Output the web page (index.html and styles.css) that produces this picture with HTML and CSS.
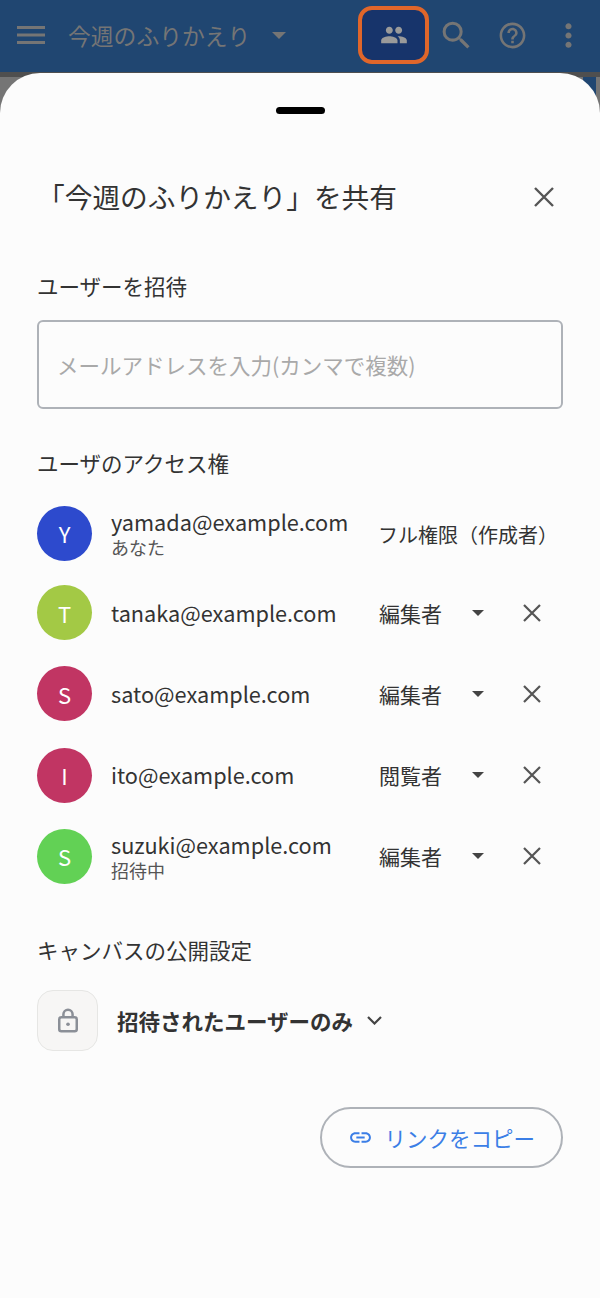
FILE: index.html
```html
<!DOCTYPE html>
<html lang="ja">

<head>
    <meta charset="UTF-8">
    <meta name="viewport" content="width=device-width, initial-scale=1.0">
    <title>共有</title>
    <link rel="stylesheet" href="styles.css">
</head>

<body>
    <header class="appbar">
        <svg class="menu-icon" viewBox="0 0 28 18"><path d="M0 1.5h28M0 9h28M0 16.5h28" /></svg>
        <span class="board-name">今週のふりかえり</span>
        <span class="board-caret"></span>
        <button class="share-btn">
            <svg viewBox="0 0 24 24" width="28" height="28"><path d="M16 11c1.66 0 2.99-1.34 2.99-3S17.66 5 16 5s-3 1.34-3 3 1.34 3 3 3zm-8 0c1.66 0 2.99-1.34 2.99-3S9.66 5 8 5 5 6.34 5 8s1.34 3 3 3zm0 2c-2.33 0-7 1.17-7 3.5V19h14v-2.5C15 14.17 10.33 13 8 13zm8 0c-.29 0-.62.02-.97.05 1.16.84 1.97 1.97 1.97 3.45V19h6v-2.5c0-2.33-4.67-3.5-7-3.5z" /></svg>
        </button>
        <svg class="bar-icon search-icon" viewBox="0 0 24 24" width="37" height="37"><path d="M15.5 14h-.79l-.28-.27A6.47 6.47 0 0 0 16 9.5 6.5 6.5 0 1 0 9.5 16c1.61 0 3.09-.59 4.23-1.57l.27.28v.79l5 4.99L20.49 19l-4.99-5zm-6 0C7.01 14 5 11.99 5 9.5S7.01 5 9.5 5 14 7.01 14 9.5 11.99 14 9.5 14z" /></svg>
        <svg class="bar-icon help-icon" viewBox="0 0 24 24" width="31" height="31"><path d="M11 18h2v-2h-2v2zm1-16C6.48 2 2 6.48 2 12s4.48 10 10 10 10-4.48 10-10S17.52 2 12 2zm0 18c-4.41 0-8-3.59-8-8s3.59-8 8-8 8 3.59 8 8-3.59 8-8 8zm0-14c-2.21 0-4 1.79-4 4h2c0-1.1.9-2 2-2s2 .9 2 2c0 2-3 1.75-3 5h2c0-2.25 3-2.5 3-5 0-2.21-1.79-4-4-4z" /></svg>
        <svg class="bar-icon more-icon" viewBox="0 0 24 24" width="37" height="37"><path d="M12 8c1.1 0 2-.9 2-2s-.9-2-2-2-2 .9-2 2 .9 2 2 2zm0 2c-1.1 0-2 .9-2 2s.9 2 2 2 2-.9 2-2-.9-2-2-2zm0 6c-1.1 0-2 .9-2 2s.9 2 2 2 2-.9 2-2-.9-2-2-2z" /></svg>
    </header>

    <main class="sheet">
        <div class="handle"></div>

        <div class="sheet-head">
            <h1>「今週のふりかえり」を共有</h1>
            <svg class="close-big" viewBox="0 0 20 20" width="20" height="20"><path d="M1 1l18 18M19 1L1 19" /></svg>
        </div>

        <h2 class="label invite-label">ユーザーを招待</h2>
        <div class="email-input">メールアドレスを入力(カンマで複数)</div>

        <h2 class="label access-label">ユーザのアクセス権</h2>
        <ul class="users">
            <li class="user user-first">
                <span class="avatar" style="background: #2d4acd">Y</span>
                <div class="user-text">
                    <div class="email">yamada@example.com</div>
                    <div class="note">あなた</div>
                </div>
                <span class="role-full">フル権限（作成者）</span>
            </li>
            <li class="user">
                <span class="avatar" style="background: #a3c945">T</span>
                <div class="user-text">
                    <div class="email">tanaka@example.com</div>
                </div>
                <span class="role">編集者</span>
                <span class="caret"></span>
                <svg class="remove" viewBox="0 0 18 18" width="18" height="18"><path d="M1 1l16 16M17 1L1 17" /></svg>
            </li>
            <li class="user">
                <span class="avatar" style="background: #c13563">S</span>
                <div class="user-text">
                    <div class="email">sato@example.com</div>
                </div>
                <span class="role">編集者</span>
                <span class="caret"></span>
                <svg class="remove" viewBox="0 0 18 18" width="18" height="18"><path d="M1 1l16 16M17 1L1 17" /></svg>
            </li>
            <li class="user">
                <span class="avatar" style="background: #c13563">I</span>
                <div class="user-text">
                    <div class="email">ito@example.com</div>
                </div>
                <span class="role">閲覧者</span>
                <span class="caret"></span>
                <svg class="remove" viewBox="0 0 18 18" width="18" height="18"><path d="M1 1l16 16M17 1L1 17" /></svg>
            </li>
            <li class="user">
                <span class="avatar" style="background: #62d155">S</span>
                <div class="user-text">
                    <div class="email">suzuki@example.com</div>
                    <div class="note">招待中</div>
                </div>
                <span class="role">編集者</span>
                <span class="caret"></span>
                <svg class="remove" viewBox="0 0 18 18" width="18" height="18"><path d="M1 1l16 16M17 1L1 17" /></svg>
            </li>
        </ul>

        <h2 class="label public-label">キャンバスの公開設定</h2>
        <div class="visibility">
            <span class="lock-box">
                <svg viewBox="0 0 24 30" width="20" height="25"><rect x="1.5" y="11" width="21" height="17" rx="2.5" /><path d="M6.5 11V7.5a5.5 5.5 0 0 1 11 0V11" /><circle class="lock-dot" cx="12" cy="19.5" r="2.2" /></svg>
            </span>
            <span class="visibility-text">招待されたユーザーのみ</span>
            <svg class="chevron" viewBox="0 0 15 9" width="15" height="9"><path d="M1 1l6.5 6.5L14 1" /></svg>
        </div>

        <div class="actions">
            <button class="copy-btn">
                <svg viewBox="0 0 24 24" width="25" height="25"><path d="M3.9 12c0-1.71 1.39-3.1 3.1-3.1h4V7H7c-2.76 0-5 2.24-5 5s2.24 5 5 5h4v-1.9H7c-1.71 0-3.1-1.39-3.1-3.1zM8 13h8v-2H8v2zm9-6h-4v1.9h4c1.71 0 3.1 1.39 3.1 3.1s-1.39 3.1-3.1 3.1h-4V17h4c2.76 0 5-2.24 5-5s-2.24-5-5-5z" /></svg>
                リンクをコピー
            </button>
        </div>
    </main>
</body>

</html>
```

FILE: styles.css
```css
* {
    box-sizing: border-box;
}

body {
    font-family: "Noto Sans CJK JP", "Noto Sans", sans-serif;
    margin: 0;
    height: 1298px;
    overflow: hidden;
    background: linear-gradient(90deg, #757575 583px, #204671 583px, #204671 596px, #757575 596px);
    color: #333;
}

/* top bar, dimmed by the sheet overlay */
.appbar {
    display: flex;
    align-items: center;
    height: 72px;
    padding: 0 0 2px 17px;
    background: #204671;
    box-shadow: 0 5px 0 #4f4f4f;
}

.menu-icon {
    width: 28px;
    height: 18px;
    fill: none;
    stroke: #757575;
    stroke-width: 3;
}

.board-name {
    margin-left: 23px;
    font-size: 22.8px;
    color: #757575;
}

.board-caret {
    margin-left: 22px;
    border-left: 7px solid transparent;
    border-right: 7px solid transparent;
    border-top: 7px solid #757575;
}

.share-btn {
    display: flex;
    align-items: center;
    justify-content: center;
    width: 71px;
    height: 58px;
    margin-left: 72px;
    padding: 0;
    background: #17346b;
    border: 4px solid #e0662a;
    border-radius: 14px;
}

.share-btn svg {
    fill: #9a9a9a;
}

.bar-icon {
    fill: #757575;
}

.search-icon {
    margin-left: 9px;
}

.help-icon {
    margin-left: 22px;
}

.more-icon {
    margin-left: 22px;
}

.sheet {
    position: relative;
    height: 1225px;
    margin-top: 1px;
    padding: 34px 37px 0;
    background: #fcfcfc;
    border-radius: 40px 40px 0 0;
}

.handle {
    width: 49px;
    height: 7px;
    margin: 0 auto;
    background: #000;
    border-radius: 4px;
}

.sheet-head {
    display: flex;
    align-items: center;
    justify-content: space-between;
    margin-top: 62px;
    padding-right: 9px;
}

h1 {
    margin: 0;
    font-size: 27.7px;
    font-weight: 400;
    line-height: 40px;
}

.close-big {
    margin-top: 2px;
    fill: none;
    stroke: #555;
    stroke-width: 2.4;
}

.label {
    margin: 0;
    font-size: 21.5px;
    font-weight: 400;
    line-height: 30px;
}

.invite-label {
    margin-top: 55px;
}

.email-input {
    display: flex;
    align-items: center;
    height: 89px;
    margin-top: 19px;
    padding-left: 18px;
    font-size: 21.5px;
    color: #a9a9a9;
    border: 2px solid #aeb2b8;
    border-radius: 6px;
}

.access-label {
    margin-top: 39px;
}

.users {
    margin: 16px 0 0;
    padding: 0;
    list-style: none;
}

.user {
    display: flex;
    align-items: center;
    height: 81.25px;
}

.user-first {
    height: 78px;
}

.avatar {
    flex: none;
    display: flex;
    align-items: center;
    justify-content: center;
    width: 55px;
    height: 55px;
    font-size: 22px;
    color: #fff;
    border-radius: 50%;
}

.user-text {
    width: 268px;
    margin-left: 19px;
}

.email {
    font-size: 21.7px;
    line-height: 28px;
}

.note {
    font-size: 18px;
    line-height: 22px;
    color: #555;
}

.role-full {
    margin: 2px 0 0 -1px;
    font-size: 20px;
}

.role {
    width: 93px;
    font-size: 21px;
}

.caret {
    border-left: 6px solid transparent;
    border-right: 6px solid transparent;
    border-top: 6px solid #444;
}

.remove {
    margin-left: 39px;
    fill: none;
    stroke: #555;
    stroke-width: 2.2;
}

.public-label {
    margin-top: 38px;
}

.visibility {
    display: flex;
    align-items: center;
    margin-top: 25px;
}

.lock-box {
    display: flex;
    align-items: center;
    justify-content: center;
    width: 61px;
    height: 61px;
    background: #f7f6f5;
    border: 1px solid #e6e6e4;
    border-radius: 16px;
}

.lock-box svg {
    fill: none;
    stroke: #8b8f97;
    stroke-width: 3;
}

.lock-box .lock-dot {
    fill: #8b8f97;
    stroke: none;
}

.visibility-text {
    margin-left: 19px;
    font-size: 21.5px;
    font-weight: 700;
}

.chevron {
    margin-left: 14px;
    fill: none;
    stroke: #444;
    stroke-width: 2.2;
}

.actions {
    display: flex;
    justify-content: flex-end;
    margin-top: 56px;
}

.copy-btn {
    display: flex;
    align-items: center;
    gap: 11px;
    height: 61px;
    padding: 0 26px;
    font-family: inherit;
    font-size: 21.5px;
    color: #3b7ee6;
    background: transparent;
    border: 2px solid #aeb2b8;
    border-radius: 31px;
}

.copy-btn svg {
    fill: #3b7ee6;
}
```
